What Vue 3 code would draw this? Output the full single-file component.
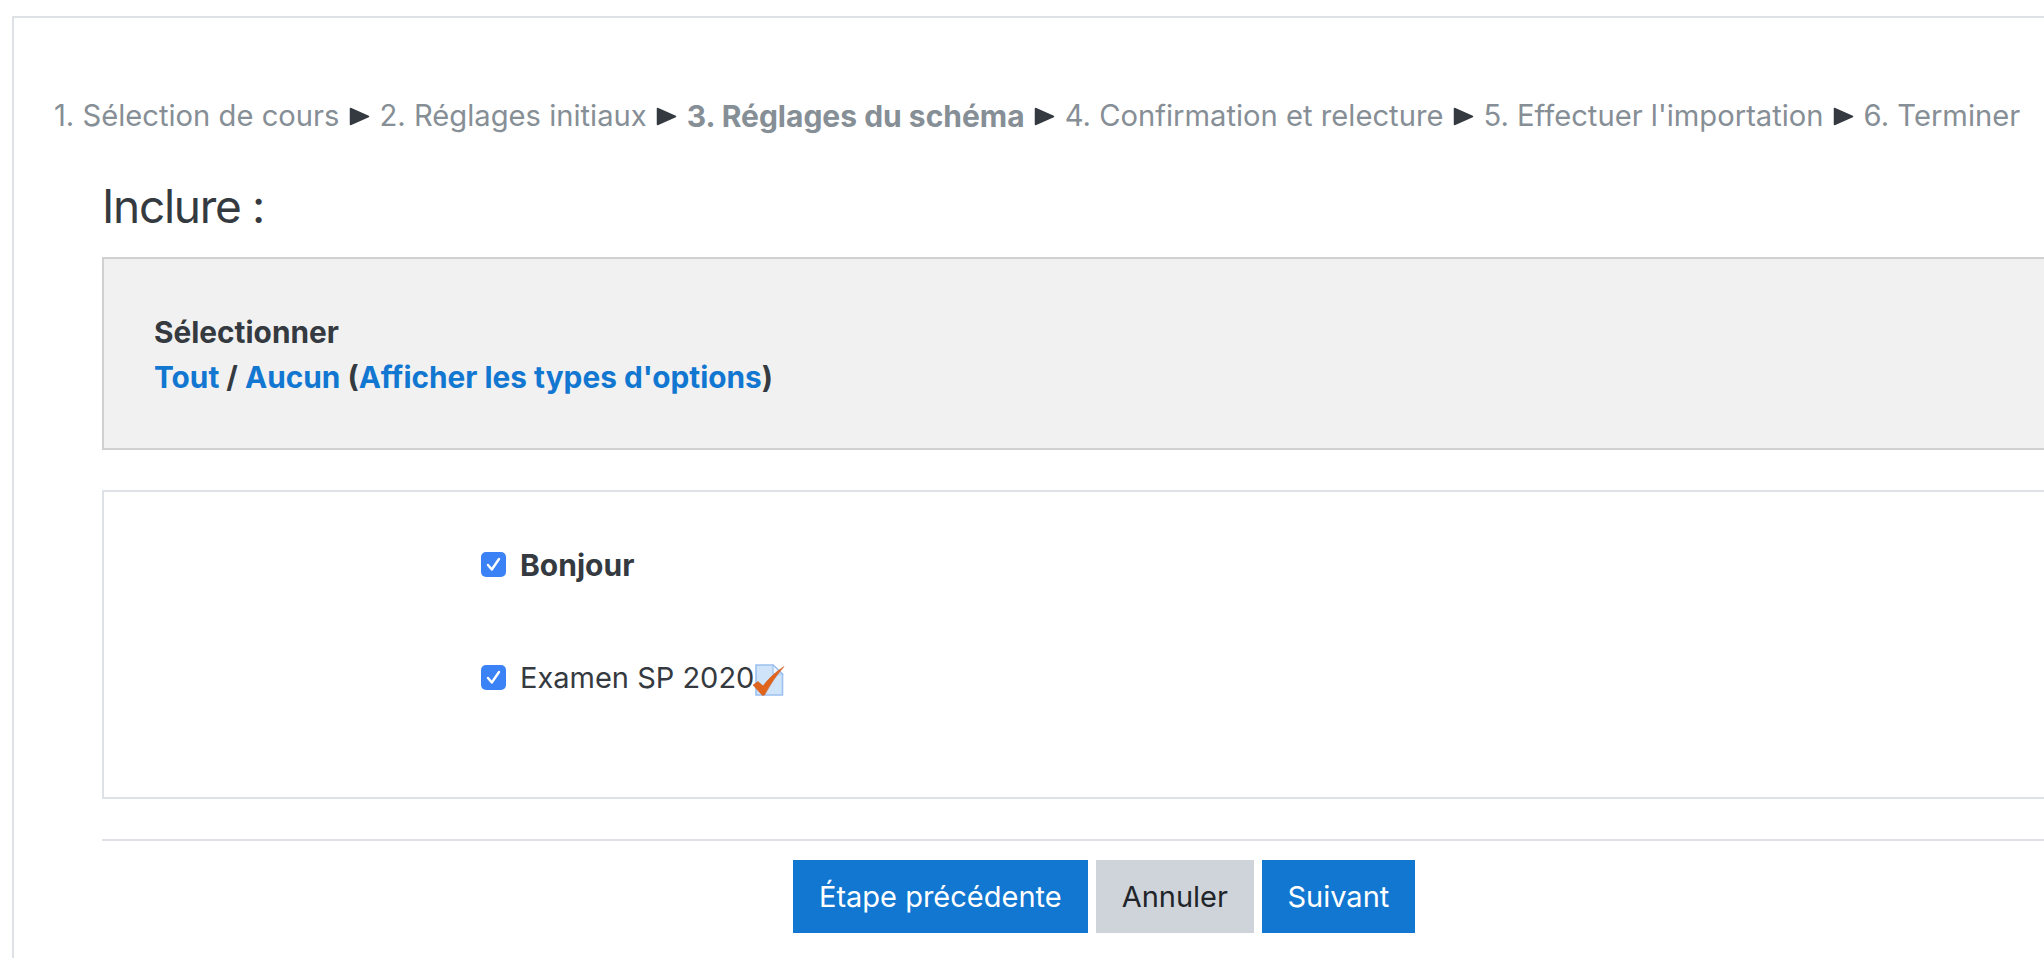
<script setup>
const steps = [
  { label: '1. Sélection de cours' },
  { label: '2. Réglages initiaux' },
  { label: '3. Réglages du schéma', current: true },
  { label: '4. Confirmation et relecture' },
  { label: '5. Effectuer l\'importation' },
  { label: '6. Terminer' }
]
</script>

<template>
  <div class="page">
    <main class="frame">
      <nav class="steps">
        <template v-for="(s, i) in steps" :key="s.label">
          <span v-if="i" class="sep">
            <svg width="21" height="19" viewBox="0 0 21 19"><path d="M1.5 1.5 L19.5 9.5 L1.5 17.5 Z" fill="#343a40" stroke="#343a40" stroke-width="1.5" stroke-linejoin="round"/></svg>
          </span>
          <span :class="['step', { current: s.current }]">{{ s.label }}</span>
        </template>
      </nav>
      <div class="content">
        <h2 class="title">Inclure :</h2>
        <section class="select-box">
          <div class="sel-title">Sélectionner</div>
          <div class="sel-links"><a>Tout</a> / <a>Aucun</a> (<a>Afficher les types d'options</a>)</div>
        </section>
        <section class="items">
          <label class="item section">
            <span class="check"><svg width="25" height="25" viewBox="0 0 25 25"><rect width="25" height="25" rx="5" fill="#3b82f7"/><path d="M7 13 L10.8 17.5 L18 7" fill="none" stroke="#fff" stroke-width="2.4" stroke-linecap="round" stroke-linejoin="round"/></svg></span>
            <b>Bonjour</b>
          </label>
          <label class="item activity">
            <span class="check"><svg width="25" height="25" viewBox="0 0 25 25"><rect width="25" height="25" rx="5" fill="#3b82f7"/><path d="M7 13 L10.8 17.5 L18 7" fill="none" stroke="#fff" stroke-width="2.4" stroke-linecap="round" stroke-linejoin="round"/></svg></span>
            <span>Examen SP 2020</span>
            <svg class="doc" width="32" height="32" viewBox="0 0 32 32">
              <path d="M3 1 H20 L29.5 10 V31 H3 Z" fill="#cfe4f8" stroke="#9cc0f0" stroke-width="1.6"/>
              <path d="M20 1 V10 H29.5 Z" fill="#eef5fc" stroke="#9cc0f0" stroke-width="1.2"/>
              <path d="M0 21 L5 17.5 L10 22 Q18 11 31 2.5 Q20 15 11.5 31 L9.5 31.5 Z" fill="#e0641c" stroke="#c8541a" stroke-width="0.5"/>
            </svg>
          </label>
        </section>
        <div class="actions">
          <button class="btn primary">Étape précédente</button>
          <button class="btn secondary">Annuler</button>
          <button class="btn primary last">Suivant</button>
        </div>
      </div>
    </main>
  </div>
</template>

<style scoped>
.page { width: 2044px; height: 958px; overflow: hidden; background: #fff; font-family: Inter, "Liberation Sans", sans-serif; color: #343a40; box-sizing: border-box; padding: 16px 0 0 12px; }
.frame { width: 2200px; height: 1200px; box-sizing: border-box; border: 2px solid #dee2e6; padding: 80px 0 0 40px; }
.steps { display: flex; align-items: center; white-space: nowrap; font-size: 29.2px; line-height: 36px; color: #868e96; gap: 9.5px; }
.step.current { font-weight: 700; font-size: 30px; }
.sep { display: flex; }
.content { padding-left: 48px; width: 2040px; }
.title { font-size: 46px; font-weight: 400; line-height: 56px; letter-spacing: -1.3px; margin: 44px 0 22.5px; color: #343a40; }
.select-box { box-sizing: border-box; height: 193px; border: 2px solid #d0d0d0; background: #f1f1f1; padding: 51px 50px; font-size: 29.8px; font-weight: 700; line-height: 45px; }
a { color: #1177d1; }
.items { box-sizing: border-box; height: 309px; margin-top: 40px; border: 2px solid #dee2e6; padding: 51px 0 0 376.5px; font-size: 29px; }
.item { display: flex; align-items: center; gap: 14.5px; height: 44px; }
.item b { font-size: 30px; }
.activity { margin-top: 69px; }
.check { display: flex; }
.doc { margin-left: -15.5px; margin-top: 5px; }
.actions { border-top: 2px solid #dee2e6; margin-top: 40.5px; padding-top: 19px; display: flex; gap: 8px; padding-left: 691px; }
.btn { border: 0; height: 73px; padding: 0 26px; font: inherit; font-size: 29px; }
.btn.last { padding: 0 25.5px; }
.primary { background: #1177d1; color: #fff; }
.secondary { background: #ced4da; color: #212529; }
</style>
